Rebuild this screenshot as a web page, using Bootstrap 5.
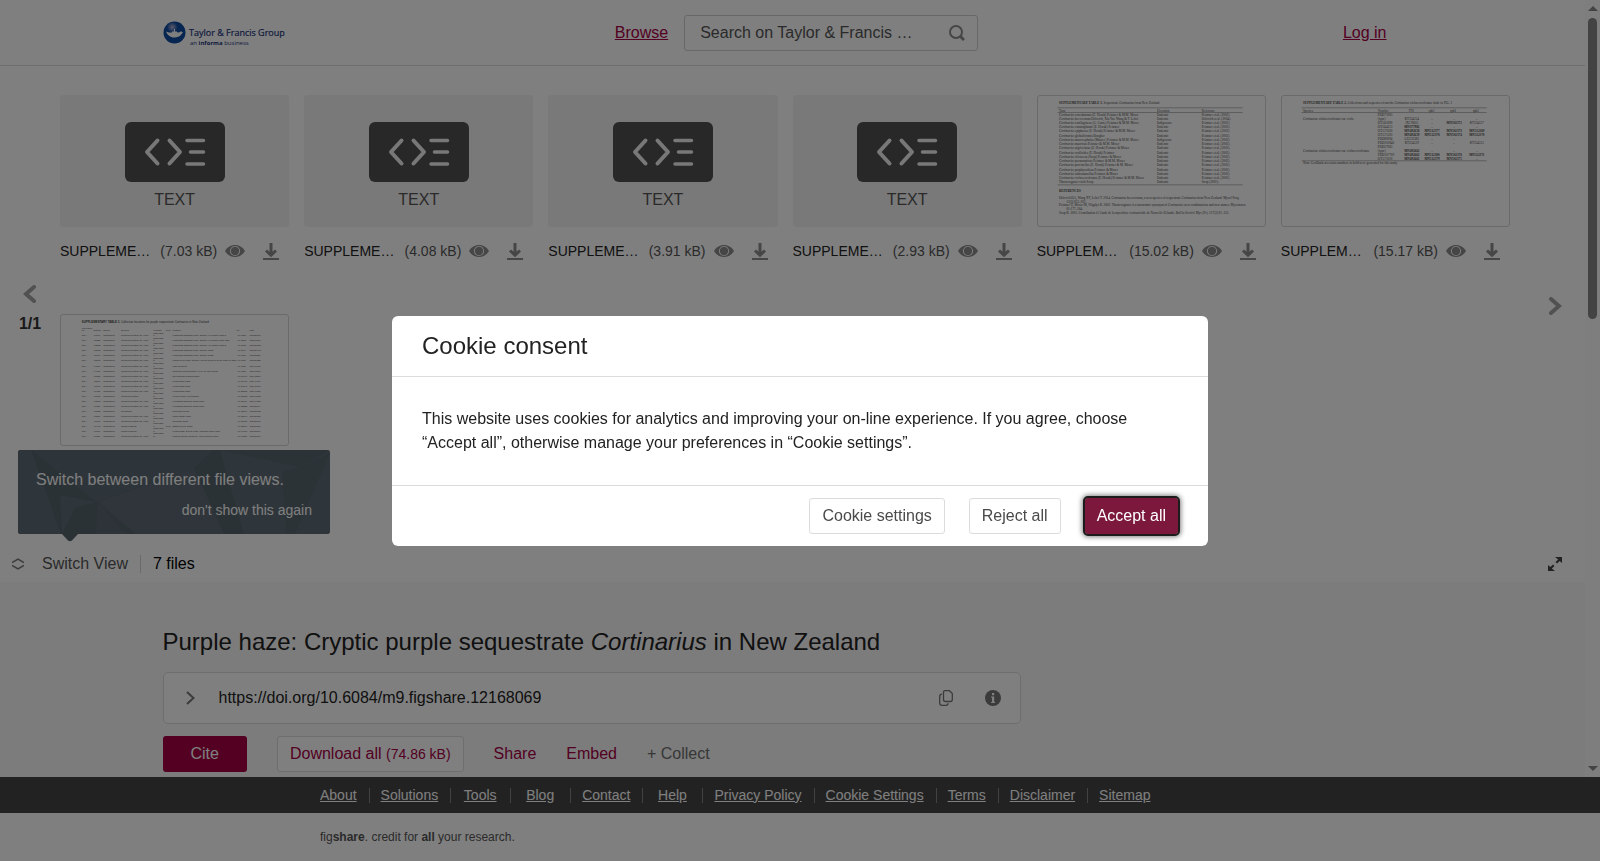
<!DOCTYPE html>
<html lang="en">
<head>
<meta charset="utf-8">
<meta name="viewport" content="width=device-width, initial-scale=1">
<title>Purple haze: Cryptic purple sequestrate Cortinarius in New Zealand</title>
<link href="https://cdn.jsdelivr.net/npm/bootstrap@5.3.0/dist/css/bootstrap.min.css" rel="stylesheet">
<style>
  :root { --brand: #a60045; --line: #dcdcdc; --ink: #222; --muted: #555; --icon: #8c8c8c; }
  body { font-family: "Liberation Sans", Arial, sans-serif; font-size: 16px; line-height: 24px; color: var(--ink); }
  svg { display: block; flex: none; }
  .page-wrap { max-width: 1260px; padding: 0; }
  .btn { --bs-btn-border-radius: 3px; --bs-btn-padding-x: 12px; --bs-btn-padding-y: 5px; --bs-btn-line-height: 24px; }
  .brand-link, .brand-link:hover { color: var(--brand); }
  .plain { background: none; border: 0; padding: 0; }

  .site-head { height: 66px; border-bottom: 1px solid var(--line); }
  .head-side { flex: 1 1 0; }
  .head-mid { margin-left: 32px; }
  .search-box { width: 294px; height: 36px; border: 1px solid #d0d0d0; border-radius: 3px; background: #fff; }
  .search-box input { border: 0; outline: 0; background: none; padding: 0 0 0 15px; min-width: 0; color: var(--ink); }
  .search-box input::placeholder { color: var(--muted); opacity: 1; }

  .viewer { height: 480px; }
  .pager-left { width: 60px; }
  .pager-right { width: 75px; padding-left: 14px; }
  .pager-btn { height: 36px; }
  .page-no { color: #333; }
  .file-grid { display: grid; grid-template-columns: repeat(6, minmax(0, 1fr)); column-gap: 15px; row-gap: 39px; padding-top: 29px; }
  .thumb { height: 132px; border-radius: 3px; background: #f3f3f3; color: var(--muted); overflow: hidden; }
  .thumb.kind { padding-top: 27px; gap: 6px; }
  .thumb.paper { background: #fff; border: 1px solid #d4d4d4; }
  .file-meta { height: 48px; font-size: 14px; line-height: 20px; }
  .file-size { color: var(--muted); margin-right: 8px; }
  .file-meta .actions { gap: 18px; margin-right: 10px; }

  .viewer-bar { height: 36px; padding: 0 23px 0 12px; }
  .switch { color: var(--muted); gap: 18px; }
  .viewer-bar .count { border-left: 1px solid #d4d4d4; height: 18px; line-height: 18px; margin-left: 12px; padding-left: 12px; color: #000; }
  .hint { left: 18px; bottom: 48px; width: 312px; height: 84px; padding: 18px 18px 12px; border-radius: 3px; background: #5c6a74; color: #fff; }
  .hint-bg { position: absolute; inset: 0; border-radius: 3px; }
  .hint-tip { position: absolute; left: 44px; top: 84px; }
  .hint a { font-size: 14px; color: #fff; }

  .details { background: #f8f8f8; padding-top: 44px; }
  .details h1 { font-size: 24px; line-height: 32px; margin-bottom: 14px; }
  .doi-box { max-width: 858px; height: 52px; border: 1px solid var(--line); border-radius: 5px; background: #fff; padding: 0 19px 0 22px; }
  .btn-cite { --bs-btn-color: #fff; --bs-btn-bg: var(--brand); --bs-btn-padding-x: 27px; }
  .btn-line { --bs-btn-border-color: #dcdcdc; --bs-btn-bg: #fff; --bs-btn-color: #4a4a4a; }
  .btn-line.brand-link { color: var(--brand); }
  .btn-line small { font-size: 14px; }
  .action { margin-left: 30px; }
  .collect { color: #6e6e6e; }

  .bar-v { width: 15px; background: #fcfcfc; padding: 6px 0; }
  .bar-v .grip { width: 9px; height: 301px; border-radius: 5px; background: #868686; margin-top: 7px; }

  .foot-nav { background: #454545; height: 36px; font-size: 14px; line-height: 20px; }
  .foot-wrap { max-width: 960px; padding: 0; }
  .foot-nav li { min-width: 60px; padding: 0 12px 0 11px; line-height: 15px; text-align: center; border-left: 1px solid #858585; }
  .foot-nav li:first-child { min-width: 48px; padding-left: 0; border: 0; }
  .foot-nav a { color: #fff; }
  .foot-note { height: 48px; font-size: 12px; color: var(--muted); }

  .modal-backdrop.show { opacity: .5; }
  .consent { --bs-modal-width: 816px; --bs-modal-border-width: 0; --bs-modal-border-radius: 6px; }
  .consent .modal-header { padding: 14px 30px; border-bottom: 1px solid var(--line); }
  .consent .modal-title { font-size: 24px; line-height: 32px; }
  .consent .modal-body { padding: 30px; }
  .consent .modal-footer { border-top: 1px solid var(--line); padding: 12px 30px; gap: 24px; }
  .consent .modal-footer > * { margin: 0; }
  .btn-accept { --bs-btn-color: #fff; --bs-btn-bg: #7b183b; --bs-btn-padding-x: 11px; outline: 2px solid #1c1c1c; box-shadow: 0 0 5px 3px rgba(0, 0, 0, .5); }
</style>
</head>
<body class="vh-100 d-flex flex-column overflow-hidden bg-white">

<svg width="0" height="0" class="position-absolute" aria-hidden="true">
  <symbol id="i-code" viewBox="0 0 100 60">
    <rect width="100" height="60" rx="6" fill="#515151"/>
    <g fill="none" stroke="#f0f0f0" stroke-width="4" stroke-linecap="round" stroke-linejoin="round">
      <path d="M32.500 18.500 22 30 32.500 41.500M44.500 18.500 55 30 44.500 41.500"/>
      <path stroke-width="3.500" d="M62 18.500H78.500M65.500 30H78.500M62 42H78.500"/>
    </g>
  </symbol>
  <symbol id="i-eye" viewBox="0 0 20 12">
    <path fill="#8c8c8c" fill-rule="evenodd" d="M0 6C2 2.500 5.500 0 10 0s8 2.500 10 6c-2 3.500-5.500 6-10 6S2 9.500 0 6ZM10 .9a5.100 5.100 0 1 0 0 10.200A5.100 5.100 0 0 0 10 .9Z"/>
    <circle cx="10" cy="6" r="4.200" fill="#8c8c8c"/>
  </symbol>
  <symbol id="i-down" viewBox="0 0 16 17">
    <path fill="none" stroke="#8c8c8c" stroke-width="3" d="M8 0V12M3 7.500 8 12.200 13 7.500"/>
    <path fill="#8c8c8c" d="M0 15H16V17H0Z"/>
  </symbol>
</svg>

<div class="d-flex flex-grow-1 overflow-hidden">
  <div class="flex-grow-1 overflow-hidden">
    <header class="site-head">
      <div class="container page-wrap h-100 d-flex align-items-center">
        <div class="head-side d-flex">
          <a href="#" aria-label="Taylor &amp; Francis Group">
            <svg width="124" height="28" viewBox="0 0 124 28">
              <defs><radialGradient id="moon" cx=".4" cy=".26" r=".25"><stop offset="0" stop-color="#b8b4d8"/><stop offset="1" stop-color="#0c4aa0"/></radialGradient></defs>
              <circle cx="11.500" cy="13.500" r="11" fill="url(#moon)"/>
              <path fill="#fff" d="M3 12.500c2 .8 4 1.200 5.500 1.200l.5-1.200h2V10h1v2.500h2l.5 1c1.500 0 2.500-.5 3.500-1.300l2 1.300c-1.500 1-2.500 5-8.500 5-4.500 0-7-2.500-8.500-6Z"/>
              <text x="26" y="17" font-family="Open Sans, sans-serif" font-size="9" fill="#23367c" stroke="#23367c" stroke-width=".2">Taylor &amp; Francis Group</text>
              <text x="27" y="26" font-family="Open Sans, sans-serif" font-size="6" fill="#23367c">an <tspan font-weight="700">informa</tspan> business</text>
            </svg>
          </a>
        </div>
        <div class="head-mid d-flex align-items-center">
          <a href="#" class="brand-link me-3">Browse</a>
          <form class="search-box d-flex align-items-center" role="search">
            <input type="search" class="flex-grow-1" aria-label="Search" placeholder="Search on Taylor &amp; Francis …">
            <button type="button" class="plain me-2 pe-1" aria-label="Search">
              <svg width="16" height="16" viewBox="0 0 16 16" fill="none" stroke="#8c8c8c" stroke-width="2"><circle cx="7" cy="7" r="6"/><path stroke-width="3" d="m11.500 11.500 3.500 3.500"/></svg>
            </button>
          </form>
        </div>
        <div class="head-side text-end pe-4"><a href="#" class="brand-link me-2 pe-1">Log in</a></div>
      </div>
    </header>

    <section class="viewer d-flex">
      <div class="pager-left d-flex flex-column justify-content-center align-items-center">
        <button class="plain pager-btn" aria-label="Previous page"><svg width="14" height="18" viewBox="0 0 14 18" fill="none" stroke="#a2a2a2" stroke-width="4" stroke-linecap="round"><path d="M11 2 3 9l8 7"/></svg></button>
        <strong class="page-no">1/1</strong>
      </div>
      <div class="flex-grow-1">
        <div class="file-grid" id="files"></div>
      </div>
      <div class="pager-right d-flex align-items-center justify-content-center">
        <button class="plain" aria-label="Next page"><svg width="14" height="18" viewBox="0 0 14 18" fill="none" stroke="#a2a2a2" stroke-width="4" stroke-linecap="round"><path d="m3 2 8 7-8 7"/></svg></button>
      </div>
    </section>

    <div class="viewer-bar position-relative d-flex align-items-center">
      <button class="plain switch d-flex align-items-center">
        <svg width="12" height="12" viewBox="0 0 12 12" fill="none" stroke="#777" stroke-width="1.500"><path d="M0 4.500 6 1l6 3.500M0 7.500 6 11l6-3.500"/></svg>
        Switch View
      </button>
      <span class="count">7 files</span>
      <button class="plain ms-auto" aria-label="Full screen">
        <svg width="14" height="14" viewBox="0 0 14 14" fill="#444"><path d="M7 0h7v6l-2.300-2-2.700 2.500L7.500 5l2.700-2.500ZM7 14H0V8l2.300 2L5 7.500 6.500 9l-2.700 2.500Z"/></svg>
      </button>
      <div class="hint position-absolute d-flex flex-column">
        <svg class="hint-bg" width="312" height="84" viewBox="0 0 312 84">
          <path fill="#57646d" d="M13 0 78 52 176 18 195 0h7l24 84H0V0Z"/>
          <path fill="#5e6c76" d="M0 0h13l30 84H0ZM42 45 78 52 57 58 44 84Z"/>
          <path fill="#5a6770" d="m80 52 28 32H78Z"/>
          <path fill="#5f6d77" d="m202 0 80 17 30-17v84H226Z"/>
          <path fill="#59666f" d="M202 0h110l-30 17ZM264 22l18-5 30-14-35 81h-9Z"/>
          <path fill="#5e6b75" d="m176 18 30 66H118L80 52Z"/>
        </svg>
        <svg class="hint-tip" width="16" height="8" viewBox="0 0 16 8"><path fill="#57646d" d="M0 0H16L10 6.500Q8 8 6 6.500Z"/></svg>
        <span class="position-relative">Switch between different file views.</span>
        <a href="#" class="position-relative ms-auto mt-auto text-decoration-none">don't show this again</a>
      </div>
    </div>

    <section class="details h-100">
      <div class="container page-wrap">
        <h1 class="fw-normal">Purple haze: Cryptic purple sequestrate <i>Cortinarius</i> in New Zealand</h1>
        <div class="doi-box d-flex align-items-center">
          <button class="plain" aria-label="Show versions"><svg width="9" height="14" viewBox="0 0 9 14" fill="none" stroke="#777" stroke-width="2"><path d="m1 1 6.500 6L1 13"/></svg></button>
          <span class="ms-4">https://doi.org/10.6084/m9.figshare.12168069</span>
          <button class="plain ms-auto" aria-label="Copy link"><svg width="14" height="16" viewBox="0 0 14 16" fill="none" stroke="#777" stroke-width="1.300"><path d="M6 .700h4.500L13.300 3.500V9.500q0 2-2 2H6.500q-2 0-2-2V2.500Q4.500.700 6 .700ZM3 4.200Q.700 4.200.700 6.500V13q0 2.300 2.300 2.300H7q2 0 2-2"/></svg></button>
          <button class="plain ms-3 ps-3" aria-label="Information"><svg width="16" height="16" viewBox="0 0 16 16"><circle cx="8" cy="8" r="8" fill="#777"/><path fill="#fff" d="M7 3h2.200v2.200H7ZM6 6.500h3.200V12H10v1H6v-1h1V7.500H6Z"/></svg></button>
        </div>
        <div class="d-flex align-items-center mt-2 pt-1">
          <button class="btn btn-cite">Cite</button>
          <button class="btn btn-line brand-link action">Download all <small>(74.86 kB)</small></button>
          <button class="plain brand-link action">Share</button>
          <button class="plain brand-link action">Embed</button>
          <button class="plain collect action">+ Collect</button>
        </div>
      </div>
    </section>
  </div>

  <div class="bar-v d-flex flex-column align-items-center" aria-hidden="true">
    <svg width="10" height="5" viewBox="0 0 10 5"><path fill="#868686" d="M0 5 5 0l5 5Z"/></svg>
    <div class="grip"></div>
    <svg class="mt-auto" width="10" height="5" viewBox="0 0 10 5"><path fill="#868686" d="M0 0 5 5l5-5Z"/></svg>
  </div>
</div>

<footer>
  <nav class="foot-nav">
    <ul class="container foot-wrap h-100 list-unstyled d-flex align-items-center mb-0">
      <li><a href="#">About</a></li><li><a href="#">Solutions</a></li><li><a href="#">Tools</a></li><li><a href="#">Blog</a></li><li><a href="#">Contact</a></li><li><a href="#">Help</a></li><li><a href="#">Privacy Policy</a></li><li><a href="#">Cookie Settings</a></li><li><a href="#">Terms</a></li><li><a href="#">Disclaimer</a></li><li><a href="#">Sitemap</a></li>
    </ul>
  </nav>
  <div class="foot-note d-flex align-items-center">
    <div class="container foot-wrap">fig<b>share</b>. credit for <b>all</b> your research.</div>
  </div>
</footer>

<div class="modal-backdrop show"></div>
<div class="modal d-block consent" role="dialog" aria-modal="true" aria-labelledby="consentTitle">
  <div class="modal-dialog modal-dialog-centered">
    <div class="modal-content">
      <div class="modal-header"><h2 class="modal-title fw-normal" id="consentTitle">Cookie consent</h2></div>
      <div class="modal-body">This website uses cookies for analytics and improving your on-line experience. If you agree, choose “Accept all”, otherwise manage your preferences in “Cookie settings”.</div>
      <div class="modal-footer">
        <button class="btn btn-line">Cookie settings</button>
        <button class="btn btn-line">Reject all</button>
        <button class="btn btn-accept">Accept all</button>
      </div>
    </div>
  </div>
</div>

<script src="https://cdn.jsdelivr.net/npm/bootstrap@5.3.0/dist/js/bootstrap.bundle.min.js"></script>
<script>
  // Page previews are drawn on a 2290 x 1320 sheet, ten units to the pixel.
  const t = (x, y, s, o = '') => `<text x="${x}" y="${y}" ${o}>${s}</text>`;
  const rule = y => `<path d="M190 ${y}H2070" stroke="#999" stroke-width="7"/>`;
  const sheet = (family, size, body) =>
    `<svg width="100%" height="100%" viewBox="0 0 2290 1320" font-family="${family}" font-size="${size}" fill="#444" aria-hidden="true">${body}</svg>`;
  const B = 'font-weight="700"';

  function taxaSheet() {
    const names = ['coneaburnus (E. Horak) Peintner &amp; M.M. Moser', 'beeverorum Orlovich, Xin Yue Wang &amp; T. Lebel',
      'cartilagineus (G. Cunn.) Peintner &amp; M.M. Moser', 'cunninghamii (E. Horak) Peintner', 'epiphaeus (E. Horak) Peintner &amp; M.M. Moser',
      'globuliformis Bougher', 'mucocephalus (Massee) Peintner &amp; M.M. Moser', 'maoricus Peintner &amp; M.M. Moser',
      'nigrivelatus (E. Horak) Peintner &amp; Moser', 'orulloides (E. Horak) Peintner', 'olivaceus (Soop) Peintner &amp; Moser',
      'perauranticus Peintner &amp; M.M. Moser', 'porcinellus (E. Horak) Peintner &amp; M. Moser', 'porphyroideus Peintner &amp; Moser',
      'subcastanellus Peintner &amp; Moser', 'violaceovolvatus (E. Horak) Peintner &amp; M.M. Moser'];
    let s = t(205, 82, `<tspan ${B}>SUPPLEMENTARY TABLE 1.</tspan> Sequestrate Cortinarius from New Zealand.`) + rule(120) + rule(168) + rule(902);
    s += t(205, 158, 'Taxa') + t(1200, 158, 'Elevation') + t(1655, 158, 'Reference');
    names.forEach((n, i) => {
      const y = 198 + i * 43;
      s += t(205, y, '<tspan font-style="italic">Cortinarius</tspan> ' + n) + t(1200, y, i == 2 || i == 6 ? 'Indigenous' : 'Endemic') +
        t(1655, y, i == 1 ? 'Orlovich et al. (2004).' : 'Peintner et al. (2002).');
    });
    s += t(205, 886, 'Thaxterogaster viola Soop') + t(1200, 886, 'Endemic') + t(1655, 886, 'Soop (2001).') + t(205, 970, 'REFERENCES', B);
    s += t(205, 1044, 'Orlovich DA, Wang XY, Lebel T. 2014. Cortinarius beeverorum, a new species of sequestrate Cortinarius from New Zealand. Mycol Prog.');
    s += t(280, 1082, '13(3):915–921.') + t(205, 1120, 'Peintner U, Moser M, Vilgalys R. 2002. Thaxterogaster is a taxonomic synonym of Cortinarius: new combinations and new names. Mycotaxon.');
    s += t(280, 1158, '81:177–184.') + t(205, 1196, 'Soop K. 2001. Contribution à l’étude de la mycoflore cortinarioïde de Nouvelle-Zélande. Bull la Société Myc (Fr). 117(2):91–132.');
    return sheet('Liberation Serif', 33, s);
  }

  function sequenceSheet() {
    let s = t(205, 82, `<tspan ${B}>SUPPLEMENTARY TABLE 2.</tspan> Collections and sequences from the Cortinarius violaceovolvatus clade in FIG. 1`) + rule(120) + rule(168) + rule(658);
    [['Species', 205], ['Voucher', 965], ['ITS', 1280], ['rpb1', 1480], ['rpb1', 1700], ['rpb2', 1930]].forEach(c => s += t(c[1], 158, c[0]));
    const rows = [['PDD71005'], ['(type)', 'KT334154', '–', '–', '–'], ['OTA61690', 'JX178611', '–', '*MN502372', 'KT334137'],
      ['OTA64113', '*MN377982', '–', '–', '–'], ['OTA71020', '*MN492658', '*MN512377', '*MN502373', '*MN512369'],
      ['OTA71503', '*MN492659', '*MN512378', '*MN502374', '*MN512370'], ['PDD89094', 'GU233385', '–', '–'],
      ['PDD101846', 'KT334129', '–', '–', 'KT334131'], ['PDD27063'], ['(type)', '*MN492662', '–', '–', '–'],
      ['PDD107709', '*MN492663', '*MN512380', '*MN502376', '*MN512371'], ['OTA71010', '*MN492661', '*MN512379', '*MN502375', '–']];
    rows.forEach((r, i) => r.forEach((c, k) => {
      const x = [965, 1310, 1515, 1740, 1970][k], bold = c[0] == '*';
      s += t(x, 198 + i * 41, c.replace('*', ''), (bold ? B : '') + (k ? ' text-anchor="middle"' : ''));
    }));
    s += t(205, 239, 'Cortinarius violaceovolvatus var. viola') + t(205, 570, 'Cortinarius violaceovolvatus var. violaceovolvatus');
    s += t(205, 694, '<tspan font-style="italic">Note:</tspan> GenBank accession numbers in bold were generated for this study.');
    return sheet('Liberation Serif', 33, s);
  }

  function locationSheet() {
    const places = ['Kahurangi National Park, Granity Hill Road, bush 2', 'Kahurangi National Park, Granity Hill Road, bush edge', 'Kahurangi National Park, Granity Hill Road, bush 2',
      'Kahurangi National Park, Granity Road', 'Kahurangi National Park, Granity Road', 'Maitai River walk, Nelson, beech forest near the track to dam', 'Lake Rotoroa', 'Orokonui Conservation Area, Te Moa Road',
      'Silverpeaks Conservation', 'Leith Ridge track', 'Leith Ridge track', 'Leith Ridge track', 'Kepler Track, Mount Burr', 'Leewards National Track Park', 'Leewards National Track Park',
      'Whirinaki forest', 'Cobb Ridge Walk', 'Rainbow Track', 'Station River Track', 'Lewis Pass, Sylvia Flats, Waterfall Tops Walk', 'Waipori Scenic Reserve, Government Track'];
    let s = t(203, 82, `<tspan ${B}>SUPPLEMENTARY TABLE 3.</tspan> Collection locations for purple sequestrate Cortinarius in New Zealand`, 'font-size="29"') + t(203, 138, 'Collection');
    [['no.', 203], ['number', 318], ['genus', 420], ['species', 600], ['Voucher', 928], ['Type', 1055], ['location', 1125], ['lat', 1775], ['long', 1905]].forEach(c => s += t(c[1], 166, c[0]));
    places.forEach((p, i) => {
      const y = 217 + i * 51;
      s += t(203, y, 'OTA') + t(325, y, 61690 + i * 431) + t(420, y, 'Cortinarius') +
        t(600, y, i == 12 ? 'violaceovolvatus' : i == 15 ? 'orixanthus' : i == 18 || i == 19 ? 'porphyrophilus' : 'violaceovolvatus var. viola') +
        t(928, y - 24, 'MN49265') + t(928, y, i % 9) + t(1125, y, p) + t(1775, y, '-40.' + (7131 + i * 371)) + t(1905, y, '172.' + (33070 + i * 1291));
      if (i == 18) s += t(1055, y, 'Type');
    });
    return sheet('Liberation Sans', 24, s);
  }

  const code = '<svg width="100" height="60"><use href="#i-code"/></svg><span>TEXT</span>';
  const files = [['SUPPLEME…', '7.03'], ['SUPPLEME…', '4.08'], ['SUPPLEME…', '3.91'], ['SUPPLEME…', '2.93'],
    ['SUPPLEM…', '15.02', taxaSheet], ['SUPPLEM…', '15.17', sequenceSheet], [null, null, locationSheet]];
  document.getElementById('files').innerHTML = files.map(([name, size, draw]) => `<div>
    <div class="thumb ${draw ? 'paper' : 'kind d-flex flex-column align-items-center'}">${draw ? draw() : code}</div>
    ${name ? `<div class="file-meta d-flex align-items-center"><span class="me-auto">${name}</span><span class="file-size">(${size} kB)</span>
      <span class="actions d-flex align-items-center"><button class="plain" aria-label="View file"><svg width="20" height="12"><use href="#i-eye"/></svg></button>
      <button class="plain" aria-label="Download file"><svg width="16" height="17"><use href="#i-down"/></svg></button></span></div>` : ''}</div>`).join('');
</script>
</body>
</html>
